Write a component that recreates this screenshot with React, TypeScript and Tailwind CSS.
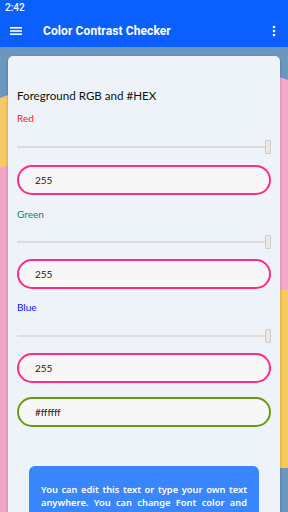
import React from "react";

function Slider() {
  return (
    <div className="relative h-[16px] flex items-center">
      <div className="h-[2px] w-full bg-[#dedbd6]" />
      <div className="absolute right-0 top-[1px] w-[6px] h-[14px] bg-[#ebe8e3] border border-[#cfcac3] rounded-[1px]" />
    </div>
  );
}

function Field({ value, border }: { value: string; border: string }) {
  return (
    <div
      className={`h-[30px] rounded-full border-2 bg-[#f7f7f7] flex items-center pl-[16px] text-[10px] text-[#222] ${border}`}
    >
      {value}
    </div>
  );
}

export default function App() {
  return (
    <div className="relative w-[288px] h-[512px] overflow-hidden bg-[#6b96bf] font-['Lato',sans-serif]">
      {/* decorative background blobs */}
      <div className="absolute left-[-40px] top-[98px] w-[80px] h-[90px] bg-[#f6c863] -skew-y-[20deg]" />
      <div className="absolute left-[-40px] top-[168px] w-[80px] h-[400px] bg-[#f3a3c8] -skew-y-[20deg]" />
      <div className="absolute right-[-40px] top-[80px] w-[80px] h-[230px] bg-[#f5a8cc] skew-y-[20deg]" />
      <div className="absolute right-[-40px] top-[290px] w-[80px] h-[178px] bg-[#f7c95c]" />

      {/* status bar + app bar */}
      <div className="relative bg-[#0b5ffd] text-white">
        <div className="h-[15px] pl-[5px] pt-[2px] text-[10px] leading-[12px] font-medium font-['Roboto',sans-serif]">2:42</div>
        <div className="h-[32px] flex items-center">
          <svg width="14" height="12" viewBox="0 0 14 12" className="ml-[9px]">
            <rect x="1" y="2" width="12" height="1.6" fill="white" />
            <rect x="1" y="5.2" width="12" height="1.6" fill="white" />
            <rect x="1" y="8.4" width="12" height="1.6" fill="white" />
          </svg>
          <div className="ml-[20px] text-[12px] font-bold font-['Roboto',sans-serif] tracking-[0.1px]">
            Color Contrast Checker
          </div>
          <svg width="4" height="12" viewBox="0 0 4 12" className="ml-auto mr-[12px]">
            <circle cx="2" cy="2" r="1.3" fill="white" />
            <circle cx="2" cy="6" r="1.3" fill="white" />
            <circle cx="2" cy="10" r="1.3" fill="white" />
          </svg>
        </div>
      </div>

      {/* card */}
      <div className="relative mx-[8px] mt-[9px] h-[500px] rounded-[5px] bg-[#eef3fa] shadow-[0_1px_3px_rgba(0,0,0,0.25)] px-[9px] pt-[32px]">
        <div className="h-[16px] text-[11.6px] text-[#111] leading-[16px]">Foreground RGB and #HEX</div>

        <div className="mt-[8px] h-[12px] text-[10px] text-[#ff1a1a] leading-[12px]">Red</div>
        <div className="mt-[15px]"><Slider /></div>
        <div className="mt-[10px]"><Field value="255" border="border-[#ff2b85]" /></div>

        <div className="mt-[13px] h-[12px] text-[10px] text-[#0d8574] leading-[12px]">Green</div>
        <div className="mt-[14px]"><Slider /></div>
        <div className="mt-[9px]"><Field value="255" border="border-[#ff2b85]" /></div>

        <div className="mt-[12px] h-[12px] text-[10px] text-[#1010ff] leading-[12px]">Blue</div>
        <div className="mt-[15px]"><Slider /></div>
        <div className="mt-[9px]"><Field value="255" border="border-[#ff2b85]" /></div>

        <div className="mt-[14px]"><Field value="#ffffff" border="border-[#6b9a12]" /></div>

        <div className="mx-[12px] mt-[39px] rounded-t-[6px] bg-[#3a86ff] px-[12px] pt-[17px] pb-[10px] text-white text-[9.3px] leading-[13px] font-semibold font-['Noto_Sans',sans-serif] text-justify">
          You can edit this text or type your own text anywhere. You can change Font color and background color.
        </div>
      </div>
    </div>
  );
}
